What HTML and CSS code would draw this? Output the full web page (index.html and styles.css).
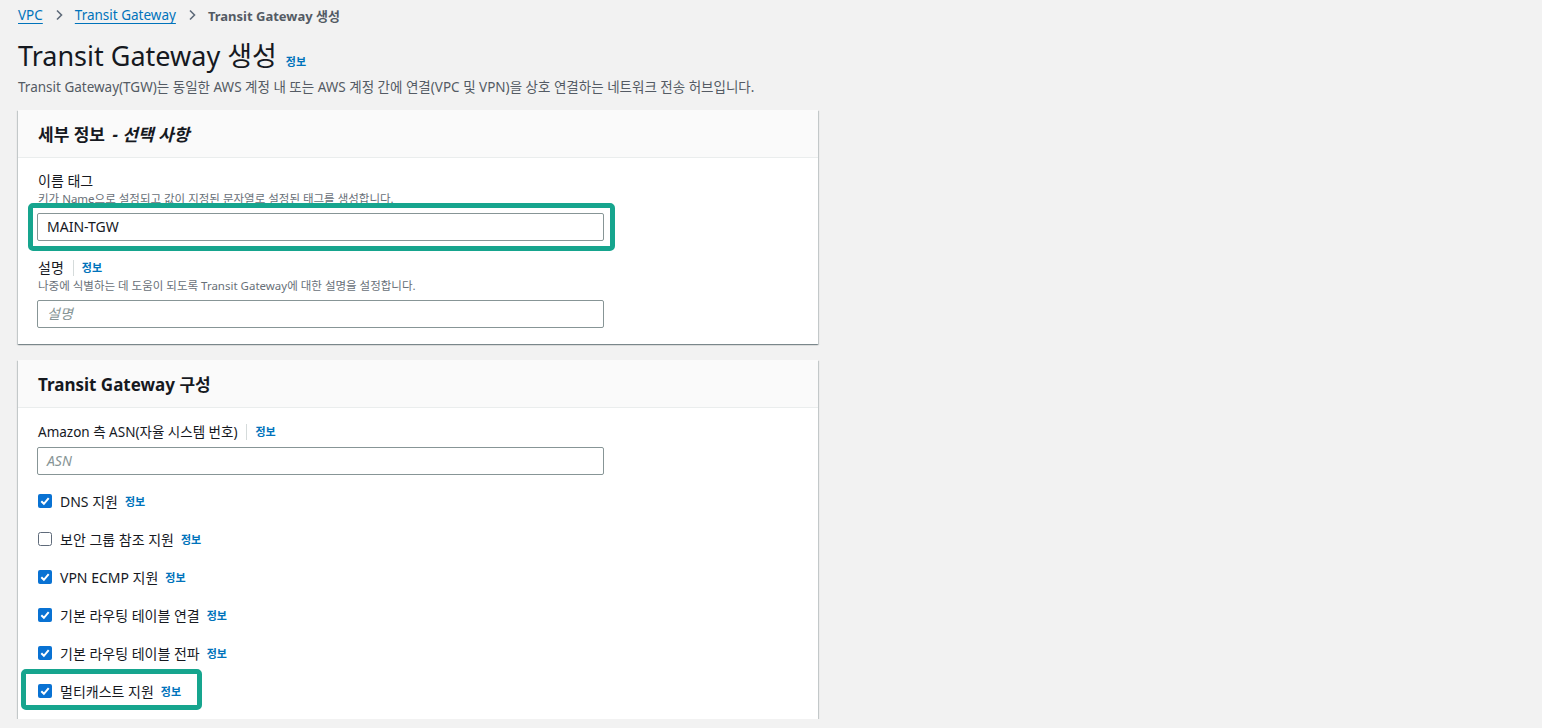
FILE: index.html
```html
<!DOCTYPE html>
<html lang="ko">
<head>
<meta charset="utf-8">
<title>Transit Gateway 생성</title>
<link rel="stylesheet" href="styles.css">
</head>
<body>
<div class="page">
  <nav class="breadcrumb">
    <a class="crumb-link" href="#">VPC</a>
    <svg class="chev" width="10" height="12" viewBox="0 0 10 12"><polyline points="3,1.5 7.5,6 3,10.5" fill="none" stroke="#5f6b7a" stroke-width="1.6"/></svg>
    <a class="crumb-link" href="#">Transit Gateway</a>
    <svg class="chev" width="10" height="12" viewBox="0 0 10 12"><polyline points="3,1.5 7.5,6 3,10.5" fill="none" stroke="#5f6b7a" stroke-width="1.6"/></svg>
    <span class="crumb-current">Transit Gateway 생성</span>
  </nav>

  <div class="title-row">
    <h1 class="title">Transit Gateway 생성</h1>
    <a class="info info-title" href="#">정보</a>
  </div>
  <p class="page-desc">Transit Gateway(TGW)는 동일한 AWS 계정 내 또는 AWS 계정 간에 연결(VPC 및 VPN)을 상호 연결하는 네트워크 전송 허브입니다.</p>

  <section class="card">
    <header class="card-header">
      <h2 class="card-title">세부 정보 <span class="optional">- 선택 사항</span></h2>
    </header>
    <div class="card-body">
      <div class="field">
        <div class="label">이름 태그</div>
        <div class="field-desc">키가 Name으로 설정되고 값이 지정된 문자열로 설정된 태그를 생성합니다.</div>
        <div class="input-wrap">
          <div class="input">MAIN-TGW</div>
          <div class="highlight hl-input"></div>
        </div>
      </div>
      <div class="field field-gap">
        <div class="label">설명<span class="divider"></span><a class="info" href="#">정보</a></div>
        <div class="field-desc">나중에 식별하는 데 도움이 되도록 Transit Gateway에 대한 설명을 설정합니다.</div>
        <div class="input-wrap">
          <div class="input placeholder">설명</div>
        </div>
      </div>
    </div>
  </section>

  <section class="card card-second">
    <header class="card-header">
      <h2 class="card-title">Transit Gateway 구성</h2>
    </header>
    <div class="card-body body-second">
      <div class="field">
        <div class="label label-asn">Amazon 측 ASN(자율 시스템 번호)<span class="divider"></span><a class="info" href="#">정보</a></div>
        <div class="input-wrap input-asn">
          <div class="input placeholder">ASN</div>
        </div>
      </div>
      <div class="checks">
        <div class="check-row">
          <svg class="cb" width="14" height="14" viewBox="0 0 14 14"><rect x="0" y="0" width="14" height="14" rx="2" fill="#0972d3"/><polyline points="3.3,7.2 5.9,9.8 10.7,4.2" fill="none" stroke="#fff" stroke-width="2"/></svg>
          <span class="check-label">DNS 지원</span><a class="info" href="#">정보</a>
        </div>
        <div class="check-row">
          <svg class="cb" width="14" height="14" viewBox="0 0 14 14"><rect x="0.5" y="0.5" width="13" height="13" rx="2" fill="#fff" stroke="#5f6b7a" stroke-width="1"/></svg>
          <span class="check-label">보안 그룹 참조 지원</span><a class="info" href="#">정보</a>
        </div>
        <div class="check-row">
          <svg class="cb" width="14" height="14" viewBox="0 0 14 14"><rect x="0" y="0" width="14" height="14" rx="2" fill="#0972d3"/><polyline points="3.3,7.2 5.9,9.8 10.7,4.2" fill="none" stroke="#fff" stroke-width="2"/></svg>
          <span class="check-label">VPN ECMP 지원</span><a class="info" href="#">정보</a>
        </div>
        <div class="check-row">
          <svg class="cb" width="14" height="14" viewBox="0 0 14 14"><rect x="0" y="0" width="14" height="14" rx="2" fill="#0972d3"/><polyline points="3.3,7.2 5.9,9.8 10.7,4.2" fill="none" stroke="#fff" stroke-width="2"/></svg>
          <span class="check-label">기본 라우팅 테이블 연결</span><a class="info" href="#">정보</a>
        </div>
        <div class="check-row">
          <svg class="cb" width="14" height="14" viewBox="0 0 14 14"><rect x="0" y="0" width="14" height="14" rx="2" fill="#0972d3"/><polyline points="3.3,7.2 5.9,9.8 10.7,4.2" fill="none" stroke="#fff" stroke-width="2"/></svg>
          <span class="check-label">기본 라우팅 테이블 전파</span><a class="info" href="#">정보</a>
        </div>
        <div class="check-row check-hl">
          <svg class="cb" width="14" height="14" viewBox="0 0 14 14"><rect x="0" y="0" width="14" height="14" rx="2" fill="#0972d3"/><polyline points="3.3,7.2 5.9,9.8 10.7,4.2" fill="none" stroke="#fff" stroke-width="2"/></svg>
          <span class="check-label">멀티캐스트 지원</span><a class="info" href="#">정보</a>
          <div class="highlight hl-check"></div>
        </div>
      </div>
    </div>
  </section>
</div>
</body>
</html>
```

FILE: styles.css
```css
* { box-sizing: border-box; }

body {
  margin: 0;
  background: #f2f2f2;
  font-family: "Noto Sans", "Noto Sans CJK KR", sans-serif;
  color: #16191f;
}

.page {
  width: 836px;
  padding: 0 18px;
}

.breadcrumb {
  height: 30px;
  display: flex;
  align-items: center;
  gap: 11px;
  font-size: 13.5px;
}

.crumb-link {
  color: #0073bb;
  text-decoration: underline;
  text-underline-offset: 3px;
}

.crumb-current {
  color: #545b64;
  font-weight: 700;
  font-size: 13px;
}

.chev { display: block; }

.title-row {
  margin-top: 8px;
  display: flex;
  align-items: baseline;
  gap: 9px;
}

.title {
  margin: 0;
  font-size: 27px;
  line-height: 36px;
  font-weight: 400;
  color: #16191f;
}

.info {
  color: #0073bb;
  font-size: 11px;
  font-weight: 700;
  text-decoration: none;
}

.page-desc {
  margin: 3px 0 0;
  font-size: 13.5px;
  line-height: 20px;
  color: #545b64;
}

.card {
  margin-top: 13px;
  width: 800px;
  background: #fff;
  box-shadow: 0 1px 1px 0 rgba(0, 28, 36, 0.3), 1px 1px 1px 0 rgba(0, 28, 36, 0.15), -1px 1px 1px 0 rgba(0, 28, 36, 0.15);
}

.card-second { margin-top: 16px; }

.card-header {
  height: 48px;
  background: #fafafa;
  border-bottom: 1px solid #eaeded;
  padding: 0 20px;
  display: flex;
  align-items: center;
}

.card-title {
  margin: 0;
  font-size: 17px;
  font-weight: 700;
  color: #16191f;
}

.optional {
  font-style: italic;
  margin-left: 3px;
}

.card-body {
  padding: 13px 19px 16px;
}

.body-second {
  padding-top: 14px;
  padding-bottom: 18px;
}

.label {
  display: flex;
  align-items: center;
  font-size: 14px;
  line-height: 20px;
  color: #16191f;
  padding-left: 1px;
}

.label-asn { font-size: 13.5px; }

.divider {
  display: inline-block;
  width: 1px;
  height: 16px;
  background: #d5dbdb;
  margin: 0 8px 0 9px;
}

.field-desc {
  font-size: 11.5px;
  line-height: 16px;
  color: #687078;
  padding-left: 1px;
}

.field-gap { margin-top: 17px; }

.input-wrap {
  position: relative;
  margin-top: 6px;
  width: 567px;
}

.input-asn { margin-top: 5px; }

.input {
  height: 28px;
  border: 1px solid #879596;
  border-radius: 2px;
  background: #fff;
  padding: 0 9px;
  font-size: 14px;
  line-height: 26px;
  color: #16191f;
}

.placeholder {
  font-style: italic;
  color: #879596;
}

.highlight {
  position: absolute;
  border: 5px solid #16a58e;
  border-radius: 5px;
  pointer-events: none;
}

.hl-input {
  top: -10px;
  bottom: -10px;
  left: -9px;
  right: -11px;
}

.checks {
  margin-top: 16px;
  display: flex;
  flex-direction: column;
  gap: 18px;
}

.check-row {
  position: relative;
  display: flex;
  align-items: center;
  height: 20px;
  align-self: flex-start;
  font-size: 14px;
  padding-left: 1px;
}

.cb { display: block; flex: none; }

.check-label {
  margin-left: 8px;
  margin-right: 7px;
  color: #16191f;
}

.hl-check {
  top: -12px;
  bottom: -9px;
  left: -16px;
  right: -21px;
}
```
